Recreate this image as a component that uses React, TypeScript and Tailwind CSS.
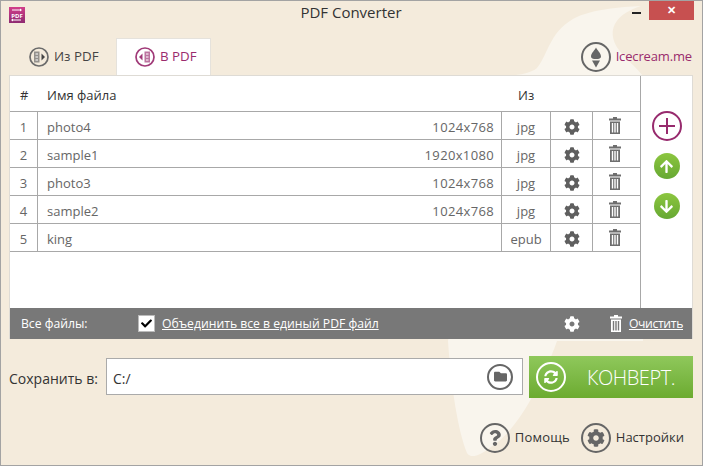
import React from 'react'
import { FaCog, FaFolder, FaArrowUp, FaArrowDown, FaSyncAlt, FaQuestion, FaCheck } from 'react-icons/fa'

const files = [
  { id: 1, name: 'photo4', size: '1024x768', ext: 'jpg' },
  { id: 2, name: 'sample1', size: '1920x1080', ext: 'jpg' },
  { id: 3, name: 'photo3', size: '1024x768', ext: 'jpg' },
  { id: 4, name: 'sample2', size: '1024x768', ext: 'jpg' },
  { id: 5, name: 'king', size: '', ext: 'epub' }
]

function Trash({ className }: { className?: string }) {
  return (
    <svg viewBox="0 0 12 17" className={className} fill="currentColor">
      <path d="M4 0h4v1.500h4v2H0v-2h4z" />
      <path fillRule="evenodd" d="M1 4.500h10V17H1zM2.800 6v9.500h1.400V6zM5.300 6v9.500h1.400V6zM7.800 6v9.500h1.400V6z" />
    </svg>
  )
}

function TabIcon({ active }: { active?: boolean }) {
  const color = active ? '#a03a78' : '#6b6b6b'
  return (
    <svg viewBox="0 0 20 20" className="w-[20px] h-[20px]">
      <circle cx="10" cy="10" r="9" fill="none" stroke={color} strokeWidth="1.700" />
      {active ? (
        <>
          <rect x="9.500" y="4.500" width="5.500" height="11" fill={color} opacity="0.7" />
          <path d="M11 7h2.500M11 10h2.500M11 13h2.500" stroke="#fff" />
          <path d="M4 10l3.500-3.500v7z" fill={color} />
        </>
      ) : (
        <>
          <rect x="5" y="4.500" width="5.500" height="11" fill={color} opacity="0.7" />
          <path d="M6.500 7H9M6.500 10H9M6.500 13H9" stroke="#fff" />
          <path d="M16 10l-3.500-3.500v7z" fill="#444" />
        </>
      )}
    </svg>
  )
}

function CircleIcon({ children, size = 'w-[30px] h-[30px]' }: { children: React.ReactNode; size?: string }) {
  return (
    <div className={`${size} rounded-full border-[2px] border-[#666] flex items-center justify-center text-[#666]`}>
      {children}
    </div>
  )
}

export default function App() {
  return (
    <div
      className="relative w-[703px] h-[466px] overflow-hidden bg-[#f4ebdc] border border-[#a3a3a3] text-[13px] text-[#333]"
      style={{ fontFamily: '"Open Sans", "Noto Sans", sans-serif' }}
    >
      {/* ice cream swirl behind everything */}
      <svg className="absolute left-0 top-0 w-[703px] h-[466px]" viewBox="0 0 703 466">
        <path
          d="M505 75C520 74 530 72 536 67C548 52 548 32 572 18C590 8 620 6 640 5C618 12 610 24 612 36C614 50 630 60 642 75L642 340L556 340C538 390 515 430 490 446C478 455 470 458 466 452C457 430 450 385 447 340Z"
          fill="#f9f5ed"
        />
      </svg>

      <div className="relative flex flex-col h-full">
        {/* title bar */}
        <div className="relative h-[37px] flex justify-center shrink-0">
          <svg viewBox="0 0 16 16" className="absolute left-[8px] top-[6px] w-[16px] h-[16px]">
            <defs>
              <linearGradient id="logo" x1="0" y1="0" x2="0" y2="1">
                <stop offset="0" stopColor="#d23f8a" />
                <stop offset="1" stopColor="#8e2a72" />
              </linearGradient>
            </defs>
            <rect width="16" height="16" fill="url(#logo)" />
            <path d="M3 3h9M3 13h9" stroke="#fff" strokeWidth="1" />
            <path d="M11 1.500l2 1.500-2 1.500zM4 11.500L2 13l2 1.500z" fill="#fff" />
            <text x="8" y="10.500" textAnchor="middle" fontSize="6" fontWeight="700" fill="#fff">PDF</text>
          </svg>
          <span className="mt-[1px] -ml-[1px] text-[15px] leading-[20px] text-[#333]">PDF Converter</span>
          <div className="absolute left-[631px] top-[11px] w-[9px] h-[2px] bg-[#222]" />
          <div className="absolute left-[648px] top-0 w-[45px] h-[19px] bg-[#c75050] flex items-center justify-center text-white text-[11px] font-bold">
            ✕
          </div>
        </div>

        {/* tabs */}
        <div className="flex items-end h-[37px] shrink-0 pl-[8px] pr-[10px]">
          <div className="w-[107px] h-[37px] flex items-center pl-[20px] gap-[5px] text-[13.300px] text-[#444]">
            <TabIcon />
            <span>Из PDF</span>
          </div>
          <div className="w-[95px] h-[37px] bg-white flex items-center pl-[18px] gap-[5px] text-[13.300px] text-[#9a2b6d] border-t border-x border-[#e5e2dc]">
            <TabIcon active />
            <span>В PDF</span>
          </div>
          <div className="ml-auto flex items-center gap-[5px] mb-[3px]">
            <div className="w-[30px] h-[30px] rounded-full border-[2px] border-[#666] flex items-center justify-center">
              <svg viewBox="0 0 12 20" className="w-[12px] h-[21px]" fill="#666">
                <path d="M6 0C7 2.500 11 5.500 11 9C11 11 9 11.500 6 11.500C3 11.500 1 11 1 9C1 5.500 5 2.500 6 0z" />
                <path d="M2 13h8L6 20z" />
              </svg>
            </div>
            <span className="text-[#9a2b6d] tracking-[-0.15px]">Icecream.me</span>
          </div>
        </div>

        {/* main panel */}
        <div className="mx-[8px] w-[684px] h-[264px] shrink-0 bg-white border-x border-t border-[#dedbd5] flex flex-col">
          <div className="flex flex-1 min-h-0">
            <div className="w-[631px] flex flex-col border-r border-[#a8a8a8]">
              <div className="flex h-[35px] items-center shrink-0 border-b border-[#a8a8a8] box-content text-[#333]">
                <div className="w-[28px] pt-[4px] pl-[10px]">#</div>
                <div className="flex-1 pt-[4px] pl-[9px]">Имя файла</div>
                <div className="w-[48px] pt-[4px] pl-[16px] mr-[90px]">Из</div>
              </div>
              {files.map(f => (
                <div key={f.id} className="flex h-[28px] items-center border-b border-[#a8a8a8] text-[#666]">
                  <div className="w-[28px] h-full pt-[4px] border-r border-[#a8a8a8] flex items-center justify-center">{f.id}</div>
                  <div className="flex-1 h-full pt-[4px] flex items-center justify-between pl-[9px] pr-[7px]">
                    <span>{f.name}</span>
                    <span className="tracking-[0.35px]">{f.size}</span>
                  </div>
                  <div className="w-[49px] h-full pt-[4px] border-l border-[#a8a8a8] flex items-center justify-center">{f.ext}</div>
                  <div className="w-[42px] h-full pt-[2px] border-l border-[#a8a8a8] flex items-center justify-center">
                    <FaCog className="w-[16px] h-[16px] text-[#5f5f5f]" />
                  </div>
                  <div className="w-[48px] h-full pr-[3px] border-l border-[#a8a8a8] flex items-center justify-center">
                    <Trash className="w-[12px] h-[17px] text-[#6e6e6e]" />
                  </div>
                </div>
              ))}
            </div>
            <div className="flex-1 flex flex-col items-center pt-[35px]">
              <div className="w-[30px] h-[30px] rounded-full border-[2px] border-[#972a6d] flex items-center justify-center">
                <svg viewBox="0 0 16 16" className="w-[16px] h-[16px]">
                  <path d="M8 0v16M0 8h16" stroke="#972a6d" strokeWidth="2" />
                </svg>
              </div>
              <div className="mt-[12px] w-[26px] h-[26px] rounded-full bg-gradient-to-b from-[#8cc63f] to-[#66a833] flex items-center justify-center">
                <FaArrowUp className="w-[15px] h-[15px] text-white" />
              </div>
              <div className="mt-[14px] w-[26px] h-[26px] rounded-full bg-gradient-to-b from-[#8cc63f] to-[#66a833] flex items-center justify-center">
                <FaArrowDown className="w-[15px] h-[15px] text-white" />
              </div>
            </div>
          </div>
          {/* all files bar */}
          <div className="h-[31px] shrink-0 bg-[#787878] text-white flex items-center text-[12.200px]">
            <span className="ml-[11px] pt-[2px] w-[117px]">Все файлы:</span>
            <div className="w-[17px] h-[17px] bg-white border border-[#bbb] flex items-center justify-center">
              <FaCheck className="w-[11px] h-[11px] text-black" />
            </div>
            <span className="ml-[7px] pt-[2px] underline">Объединить все в единый PDF файл</span>
            <FaCog className="ml-auto mt-[1px] w-[16px] h-[16px] text-white" />
            <Trash className="ml-[30px] w-[12px] h-[17px] text-white" />
            <span className="ml-[7px] mr-[9px] pt-[2px] underline tracking-[-0.35px]">Очистить</span>
          </div>
        </div>

        {/* save row */}
        <div className="flex items-center mt-[16px] pl-[8px] h-[43px] shrink-0">
          <span className="w-[97px] pt-[4px] text-[14px] text-[#333]">Сохранить в:</span>
          <div className="w-[417px] h-[37px] bg-white border border-[#aaa] flex items-center justify-between pl-[6px] pr-[9px] text-[14px]">
            <span className="pt-[3px]">C:/</span>
            <CircleIcon size="w-[26px] h-[26px]">
              <FaFolder className="w-[13px] h-[13px]" />
            </CircleIcon>
          </div>
          <div className="ml-[6px] w-[164px] h-[42px] bg-gradient-to-b from-[#8fc85b] to-[#6cab2f] flex items-center text-white">
            <div className="ml-[7px] w-[30px] h-[30px] rounded-full border-[2px] border-white flex items-center justify-center">
              <FaSyncAlt className="w-[14px] h-[14px]" />
            </div>
            <span className="ml-[21px] pt-[2px] text-[20px] font-light tracking-[-0.45px]">КОНВЕРТ.</span>
          </div>
        </div>

        {/* footer links */}
        <div className="flex items-center justify-end gap-[11px] mt-[25px] pr-[18px] text-[#333]">
          <div className="flex items-center gap-[5px]">
            <CircleIcon>
              <FaQuestion className="w-[16px] h-[16px]" />
            </CircleIcon>
            <span className="w-[55px] tracking-[0.2px]">Помощь</span>
          </div>
          <div className="flex items-center gap-[5px]">
            <CircleIcon>
              <FaCog className="w-[18px] h-[18px]" />
            </CircleIcon>
            <span>Настройки</span>
          </div>
        </div>
      </div>
    </div>
  )
}
